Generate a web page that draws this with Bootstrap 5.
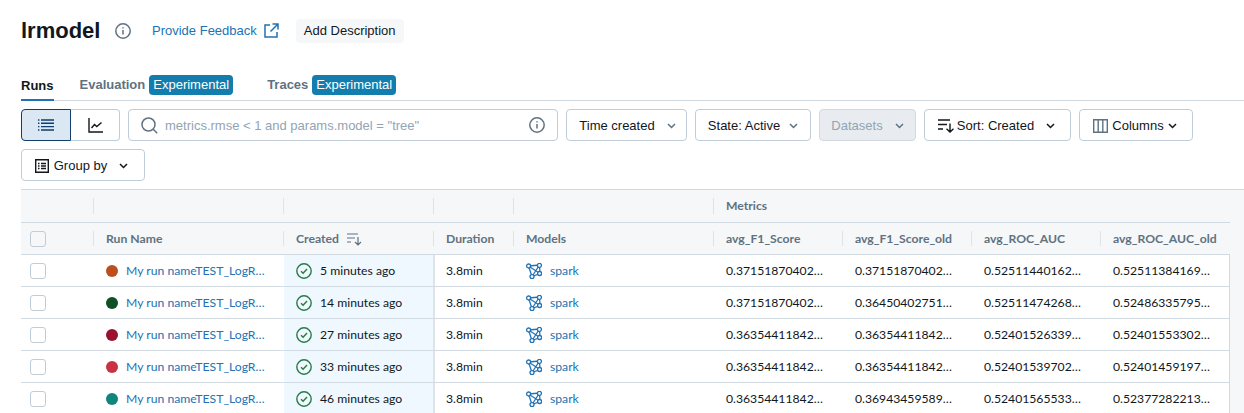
<!DOCTYPE html>
<html lang="en">
<head>
  <meta charset="UTF-8" />
  <title>lrmodel - Experiments</title>
  <link href="https://cdn.jsdelivr.net/npm/bootstrap@5.3.0/dist/css/bootstrap.min.css" rel="stylesheet" />
  <style>
    html, body { height: 413px; overflow: hidden; }
    body { font-family: "Liberation Sans", Arial, sans-serif; font-size: 13px; color: #11171c; background: #fff; padding: 0 0 0 21px; }

    .page-head { height: 60px; align-items: center; padding-top: 1px; }
    .page-title { font-size: 22px; font-weight: 700; margin: 0; line-height: 28px; width: 94px; }
    .feedback { color: #2272b4; text-decoration: none; margin-left: 21px; }
    .feedback-icon { margin-left: 7px; }
    .add-desc { background: #f6f7f9; border-radius: 4px; padding: 0 8px; height: 24px; line-height: 24px; color: #11171c; margin-left: 17px; }

    .exp-tabs { height: 41px; border-bottom: 1px solid #d1d9e1; align-items: flex-end; }
    .exp-tab { font-weight: 700; color: #5f7281; height: 26px; line-height: 22px; white-space: nowrap; }
    .exp-tab.on { color: #11171c; border-bottom: 2px solid #2272b4; margin-bottom: -1px; }
    .exp-tag { background: #137dae; color: #fff; font-weight: 400; border-radius: 4px; padding: 0 4px; display: inline-block; height: 20px; line-height: 20px; margin-left: 4px; }

    .tool-row { padding-top: 8px; width: 1172px; }
    .tool-btn { height: 32px; padding: 1px 0 0; background: #fff; border: 1px solid #c0cdd8; border-radius: 4px; font-size: 13px; color: #11171c; display: flex; align-items: center; justify-content: center; }
    .tool-btn:disabled { background: #e8ecf0; color: #92a4b3; opacity: 1; border-color: #d1d9e1; }
    .tool-btn.nudge { padding-right: 2px; }
    .seg { width: 99px; height: 32px; }
    .seg-item { width: 50px; height: 32px; border: 1px solid #c0cdd8; display: flex; align-items: center; justify-content: center; }
    .seg-item.on { background: #dbe7f2; border-color: #0e3f6e; border-radius: 4px 0 0 4px; }
    .seg-item.off { width: 49px; border-left: 0; border-radius: 0 4px 4px 0; }
    .run-search { width: 430px; height: 32px; border: 1px solid #c0cdd8; border-radius: 4px; padding: 0 12px; gap: 7px; }
    .run-search input { border: 0; outline: 0; flex: 1; padding: 1px 0 0; font-size: 13px; font-family: inherit; color: #11171c; min-width: 0; }
    .run-search input::placeholder { color: #92a4b3; opacity: 1; }

    .runs-wrap { margin-top: 8px; background: #f6f7f9; border-top: 1px solid #d1d9e1; }
    .runs-grid { table-layout: fixed; width: 1209px; border-collapse: separate; border-spacing: 0; margin: 0; font-family: Lato, "Noto Sans", sans-serif; font-size: 12.2px; color: #11171c; }
    .runs-grid th { height: 32px; background: #f6f7f9; color: #5f7281; font-weight: 700; border-bottom: 1px solid #d1d9e1; padding: 1px 13px 0; position: relative; white-space: nowrap; }
    .runs-grid thead tr:first-child th { height: 33px; }
    .runs-grid th.sep::before { content: ""; position: absolute; left: 0; top: 8px; bottom: 8px; border-left: 1px solid #dde3e8; }
    .runs-grid td { height: 32px; background: #fff; border-bottom: 1px solid #d1d9e1; padding: 1px 13px 0; white-space: nowrap; overflow: hidden; }
    .runs-grid td:last-child { border-right: 1px solid #d1d9e1; }
    .runs-grid .first { padding-left: 9px; padding-top: 0; }
    .runs-grid td.created { background: #eff7ff; border-left: 1px solid #fff; padding: 1px 0 0 12px; }
    .runs-grid td.after-created { border-left: 2px solid #dde3e8; padding-left: 11px; }
    .runs-grid a { color: #2272b4; text-decoration: none; }
    .run-box { display: block; width: 16px; height: 16px; border: 1px solid #c0cdd8; border-radius: 3px; background: #fff; }
    th .run-box { background: #f6f7f9; }
    .run-dot { width: 12px; height: 12px; border-radius: 50%; flex: none; }
    .sort-mark { margin-left: 5px; }
  </style>
</head>
<body>
  <div class="d-flex page-head">
    <h1 class="page-title">lrmodel</h1>
    <svg width="16" height="16" viewBox="0 0 16 16" fill="none" stroke="#5f7281" stroke-width="1.5"><circle cx="8" cy="8" r="7.2"/><path d="M8 7v4.5M8 4.2v1.4"/></svg>
    <a class="feedback" href="#">Provide Feedback</a>
    <svg class="feedback-icon" width="15" height="15" viewBox="0 0 15 15" fill="none" stroke="#2272b4" stroke-width="1.5"><path d="M6 2H1v12h12V9M8.5 1H14v5.5M14 1 6.5 8.5"/></svg>
    <span class="add-desc">Add Description</span>
  </div>

  <div class="d-flex exp-tabs">
    <div class="exp-tab on">Runs</div>
    <div class="exp-tab" style="margin-left:26px">Evaluation<span class="exp-tag">Experimental</span></div>
    <div class="exp-tab" style="margin-left:34px">Traces<span class="exp-tag">Experimental</span></div>
  </div>

  <div class="d-flex flex-wrap gap-2 tool-row">
    <div class="d-flex seg">
      <div class="seg-item on">
        <svg width="16" height="12" viewBox="0 0 16 12" fill="none" stroke="#0e3f6e" stroke-width="1.4"><path d="M3 1h13M3 4.3h13M3 7.6h13M3 11h13M0 1h1.4M0 4.3h1.4M0 7.6h1.4M0 11h1.4"/></svg>
      </div>
      <div class="seg-item off">
        <svg width="15" height="15" viewBox="0 0 15 15" fill="none" stroke="#11171c" stroke-width="1.4"><path d="M1 0v14h14M3.5 10 6.5 6.5 8.8 8.5 13.5 4.5"/></svg>
      </div>
    </div>

    <div class="d-flex align-items-center run-search">
      <svg width="17" height="17" viewBox="0 0 17 17" fill="none" stroke="#5f7281" stroke-width="1.5"><circle cx="7.5" cy="7.5" r="6.5"/><path d="m12.2 12.2 4 4"/></svg>
      <input type="text" placeholder='metrics.rmse &lt; 1 and params.model = "tree"' />
      <svg width="16" height="16" viewBox="0 0 16 16" fill="none" stroke="#5f7281" stroke-width="1.5"><circle cx="8" cy="8" r="7.2"/><path d="M8 7v4.5M8 4.2v1.4"/></svg>
    </div>

    <button class="tool-btn" style="width:121px;padding-left:2px"><span>Time created</span><svg style="margin-left:12px" width="9" height="6" viewBox="0 0 9 6" fill="none" stroke="#5f7281" stroke-width="1.5"><path d="m1 1 3.5 3.5L8 1"/></svg></button>
    <button class="tool-btn" style="width:116px"><span>State: Active</span><svg style="margin-left:9px" width="9" height="6" viewBox="0 0 9 6" fill="none" stroke="#5f7281" stroke-width="1.5"><path d="m1 1 3.5 3.5L8 1"/></svg></button>
    <button class="tool-btn" style="width:97px" disabled><span>Datasets</span><svg style="margin-left:12px" width="9" height="6" viewBox="0 0 9 6" fill="none" stroke="#5f7281" stroke-width="1.5"><path d="m1 1 3.5 3.5L8 1"/></svg></button>
    <button class="tool-btn nudge" style="width:147px">
      <svg width="16" height="14" viewBox="0 0 16 14" fill="none" stroke="#11171c" stroke-width="1.4"><path d="M0 1h12M0 5.5h9M0 10h5M12 4.5V13M8.5 9.8 12 13l3.5-3.2"/></svg>
      <span style="margin-left:3px">Sort: Created</span>
      <svg style="margin-left:12px" width="9" height="6" viewBox="0 0 9 6" fill="none" stroke="#11171c" stroke-width="1.5"><path d="m1 1 3.5 3.5L8 1"/></svg>
    </button>
    <button class="tool-btn nudge" style="width:114px">
      <svg width="15" height="14" viewBox="0 0 15 14" fill="none" stroke="#5f7281" stroke-width="1.4"><path d="M.7.7h13.6v12.6H.7zM5.2.7v12.6M9.8.7v12.6"/></svg>
      <span style="margin-left:4px">Columns</span>
      <svg style="margin-left:4px" width="9" height="6" viewBox="0 0 9 6" fill="none" stroke="#11171c" stroke-width="1.5"><path d="m1 1 3.5 3.5L8 1"/></svg>
    </button>
    <button class="tool-btn" style="width:124px;padding-right:3px">
      <svg width="14" height="14" viewBox="0 0 14 14" fill="none" stroke="#11171c" stroke-width="1.4"><path d="M.7.7h12.6v12.6H.7zM3 4.5h1.5M6 4.5h5M3 7h1.5M6 7h5M3 9.5h1.5M6 9.5h5"/></svg>
      <span style="margin-left:5px">Group by</span>
      <svg style="margin-left:12px" width="9" height="6" viewBox="0 0 9 6" fill="none" stroke="#11171c" stroke-width="1.5"><path d="m1 1 3.5 3.5L8 1"/></svg>
    </button>
  </div>

  <div class="runs-wrap">
    <table class="runs-grid">
      <colgroup>
        <col style="width:72px" /><col style="width:190px" /><col style="width:150px" /><col style="width:80px" /><col style="width:200px" />
        <col style="width:129px" /><col style="width:129px" /><col style="width:129px" /><col style="width:130px" />
      </colgroup>
      <thead>
        <tr><th></th><th class="sep"></th><th class="sep"></th><th class="sep"></th><th class="sep"></th><th class="sep">Metrics</th><th></th><th></th><th></th></tr>
        <tr>
          <th class="first"><span class="run-box"></span></th>
          <th class="sep">Run Name</th>
          <th class="sep">Created
            <svg class="sort-mark" width="15" height="13" viewBox="0 0 15 13" fill="none" stroke="#5f7281" stroke-width="1.2"><path d="M0 1h11M0 5h8M0 9h4M11 4v8M8 9l3 3 3-3"/></svg>
          </th>
          <th class="sep">Duration</th>
          <th class="sep">Models</th>
          <th class="sep">avg_F1_Score</th>
          <th class="sep">avg_F1_Score_old</th>
          <th class="sep">avg_ROC_AUC</th>
          <th class="sep">avg_ROC_AUC_old</th>
        </tr>
      </thead>
      <tbody id="runRows"></tbody>
    </table>
  </div>

  <script src="https://cdn.jsdelivr.net/npm/bootstrap@5.3.0/dist/js/bootstrap.bundle.min.js"></script>
  <script>
    const runs = [
      { color: '#bd4f1f', age: '5 minutes ago',  vals: ['0.37151870402…', '0.37151870402…', '0.52511440162…', '0.52511384169…'] },
      { color: '#0f5029', age: '14 minutes ago', vals: ['0.37151870402…', '0.36450402751…', '0.52511474268…', '0.52486335795…'] },
      { color: '#9b1030', age: '27 minutes ago', vals: ['0.36354411842…', '0.36354411842…', '0.52401526339…', '0.52401553302…'] },
      { color: '#c83243', age: '33 minutes ago', vals: ['0.36354411842…', '0.36354411842…', '0.52401539702…', '0.52401459197…'] },
      { color: '#0f857b', age: '46 minutes ago', vals: ['0.36354411842…', '0.36943459589…', '0.52401565533…', '0.52377282213…'] }
    ];

    const okIcon = '<svg width="16" height="16" viewBox="0 0 16 16" fill="none" stroke="#277c43" stroke-width="1.4"><circle cx="8" cy="8" r="7.2"/><path d="m5 8.3 2.1 2L11 6"/></svg>';
    const modelIcon = '<svg width="16" height="16" viewBox="0 0 16 16" fill="none" stroke="#2272b4" stroke-width="1.3"><path d="M2.5 3 13.5 2 14 10.5 6 13.5zM2.5 3 14 10.5M13.5 2 6 13.5"/><g fill="#fff"><circle cx="2.6" cy="3" r="2"/><circle cx="13.4" cy="2.4" r="2"/><circle cx="13.6" cy="10.5" r="2"/><circle cx="6" cy="13.6" r="2"/></g></svg>';

    document.getElementById('runRows').innerHTML = runs.map(run => `
      <tr>
        <td class="first"><span class="run-box"></span></td>
        <td><div class="d-flex align-items-center gap-2"><span class="run-dot" style="background:${run.color}"></span><a href="#">My run nameTEST_LogR…</a></div></td>
        <td class="created"><div class="d-flex align-items-center gap-2">${okIcon}<span>${run.age}</span></div></td>
        <td class="after-created">3.8min</td>
        <td><div class="d-flex align-items-center gap-2">${modelIcon}<a href="#">spark</a></div></td>
        ${run.vals.map(v => `<td>${v}</td>`).join('')}
      </tr>`).join('');
  </script>
</body>
</html>
